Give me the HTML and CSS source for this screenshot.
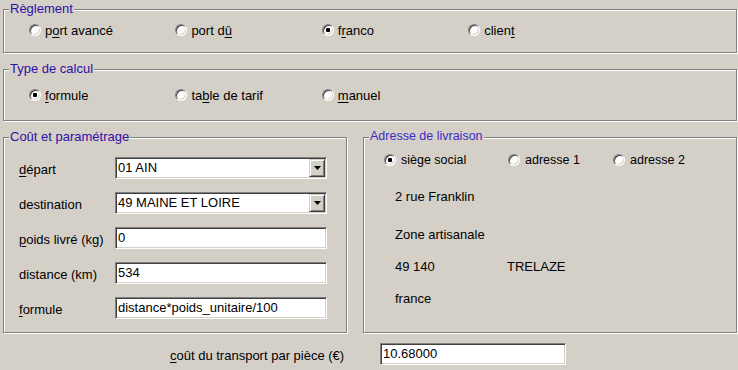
FILE: index.html
```html
<!DOCTYPE html>
<html lang="fr">
<head>
    <meta charset="UTF-8">
    <title>Frais de port</title>
    <link rel="stylesheet" href="styles.css">
</head>
<body>
    <div class="window">
        <div class="group group-reglement">
            <span class="group-title">Règlement</span>
            <div class="options">
                <label class="option"><span class="radio"></span>p<u>o</u>rt avancé</label>
                <label class="option"><span class="radio"></span>port d<u>û</u></label>
                <label class="option"><span class="radio checked"></span>f<u>r</u>anco</label>
                <label class="option"><span class="radio"></span>clien<u>t</u></label>
            </div>
        </div>

        <div class="group group-calcul">
            <span class="group-title">Type de calcul</span>
            <div class="options">
                <label class="option"><span class="radio checked"></span><u>f</u>ormule</label>
                <label class="option"><span class="radio"></span>ta<u>b</u>le de tarif</label>
                <label class="option"><span class="radio"></span><u>m</u>anuel</label>
            </div>
        </div>

        <div class="row-groups">
            <div class="group group-cout">
                <span class="group-title">Coût et paramétrage</span>
                <div class="form-grid">
                    <label class="field-label"><u>d</u>épart</label>
                    <div class="combo">
                        <span class="combo-value">01 AIN</span>
                        <span class="combo-btn"><svg width="7" height="4" viewBox="0 0 7 4"><polygon points="0,0 7,0 3.5,4" fill="#000"/></svg></span>
                    </div>

                    <label class="field-label">destination</label>
                    <div class="combo">
                        <span class="combo-value">49 MAINE ET LOIRE</span>
                        <span class="combo-btn"><svg width="7" height="4" viewBox="0 0 7 4"><polygon points="0,0 7,0 3.5,4" fill="#000"/></svg></span>
                    </div>

                    <label class="field-label"><u>p</u>oids livré (kg)</label>
                    <input class="textbox" type="text" value="0">

                    <label class="field-label">distance (km)</label>
                    <input class="textbox" type="text" value="534">

                    <label class="field-label"><u>f</u>ormule</label>
                    <input class="textbox" type="text" value="distance*poids_unitaire/100">
                </div>
            </div>

            <div class="group group-adresse">
                <span class="group-title small">Adresse de livraison</span>
                <div class="addr-options">
                    <label class="option addr-siege"><span class="radio checked"></span>siège social</label>
                    <label class="option addr-1"><span class="radio"></span>adresse 1</label>
                    <label class="option addr-2"><span class="radio"></span>adresse 2</label>
                </div>
                <div class="address">
                    <div class="addr-line">2 rue Franklin</div>
                    <div class="addr-line addr-zone">Zone artisanale</div>
                    <div class="addr-line addr-city"><span class="addr-cp">49 140</span><span>TRELAZE</span></div>
                    <div class="addr-line">france</div>
                </div>
            </div>
        </div>

        <div class="total-row">
            <label class="total-label"><u>c</u>oût du transport par pièce (€)</label>
            <input class="textbox total-box" type="text" value="10.68000">
        </div>
    </div>
</body>
</html>
```

FILE: styles.css
```css
* {
    margin: 0;
    padding: 0;
    box-sizing: border-box;
}

body {
    font-family: 'Liberation Sans', Arial, sans-serif;
    font-size: 13px;
    color: #000;
    background-color: #d4d0c8;
    width: 738px;
    height: 370px;
    overflow: hidden;
}

.window {
    padding: 9px 0 0 3px;
}

u {
    text-decoration: underline;
    text-underline-offset: 2px;
}

/* Etched group boxes */
.group {
    position: relative;
    width: 734px;
    border: 1px solid #808080;
    box-shadow: inset 1px 1px #fff, 1px 1px #fff;
}

.group-title {
    position: absolute;
    top: -9px;
    left: 5px;
    padding: 0 1px;
    line-height: 15px;
    background-color: #d4d0c8;
    color: #2f0fa6;
    white-space: nowrap;
}

.group-title.small {
    font-size: 12.5px;
    color: #3a2cc0;
}

.group-reglement {
    height: 44px;
    padding: 14px 0 0 25px;
}

.group-calcul {
    height: 52px;
    margin-top: 16px;
    padding: 19px 0 0 25px;
}

.options {
    display: flex;
}

.option {
    display: flex;
    flex: none;
    align-items: center;
    width: 146.4px;
    height: 12px;
    white-space: nowrap;
}

/* Classic radio button */
.radio {
    position: relative;
    flex: none;
    width: 12px;
    height: 12px;
    margin-right: 4px;
    border-radius: 50%;
    background-color: #fff;
    border: 1px solid;
    border-color: #808080 #fff #fff #808080;
    box-shadow: inset 1px 1px #404040, inset -1px -1px #d4d0c8;
}

.radio.checked::after {
    content: "";
    position: absolute;
    left: 3px;
    top: 3px;
    width: 4px;
    height: 4px;
    border-radius: 1px;
    background-color: #000;
}

.row-groups {
    display: flex;
    gap: 16px;
    margin-top: 16px;
}

.group-cout {
    width: 344px;
    height: 196px;
    padding: 19px 0 0 15px;
}

.form-grid {
    display: grid;
    grid-template-columns: 96px 212px;
    grid-auto-rows: 22px;
    row-gap: 13px;
    align-items: center;
}

.field-label {
    padding-top: 2px;
    white-space: nowrap;
}

/* Sunken fields */
.textbox,
.combo {
    width: 212px;
    height: 22px;
    background-color: #fff;
    border: 1px solid;
    border-color: #808080 #fff #fff #808080;
    box-shadow: inset 1px 1px #404040, inset -1px -1px #d4d0c8;
}

.textbox {
    font: inherit;
    color: #000;
    padding: 0 1px 2px 2px;
    outline: none;
}

.combo {
    display: flex;
    padding: 1px;
}

.combo-value {
    flex: 1;
    padding-left: 1px;
    line-height: 17px;
}

.combo-btn {
    display: flex;
    align-items: center;
    justify-content: center;
    width: 16px;
    height: 18px;
    background-color: #d4d0c8;
    border: 1px solid;
    border-color: #d4d0c8 #404040 #404040 #d4d0c8;
    box-shadow: inset 1px 1px #fff, inset -1px -1px #808080;
}

.group-adresse {
    width: 374px;
    height: 196px;
    padding: 16px 0 0 20px;
}

.addr-options {
    display: flex;
    font-size: 12.5px;
}

.addr-options .radio {
    margin-right: 5px;
}

.addr-siege {
    width: 124px;
}

.addr-1 {
    width: 105px;
}

.addr-2 {
    width: auto;
}

.address {
    display: flex;
    flex-direction: column;
    gap: 16px;
    margin: 23px 0 0 11px;
}

.addr-line {
    line-height: 16px;
}

.addr-zone {
    margin-top: 6px;
}

.addr-city {
    display: flex;
}

.addr-cp {
    width: 112px;
}

.total-row {
    display: flex;
    align-items: center;
    margin-top: 10px;
    padding-left: 167px;
}

.total-label {
    width: 210px;
    padding-top: 2px;
}

.total-box {
    width: 186px;
}
```
